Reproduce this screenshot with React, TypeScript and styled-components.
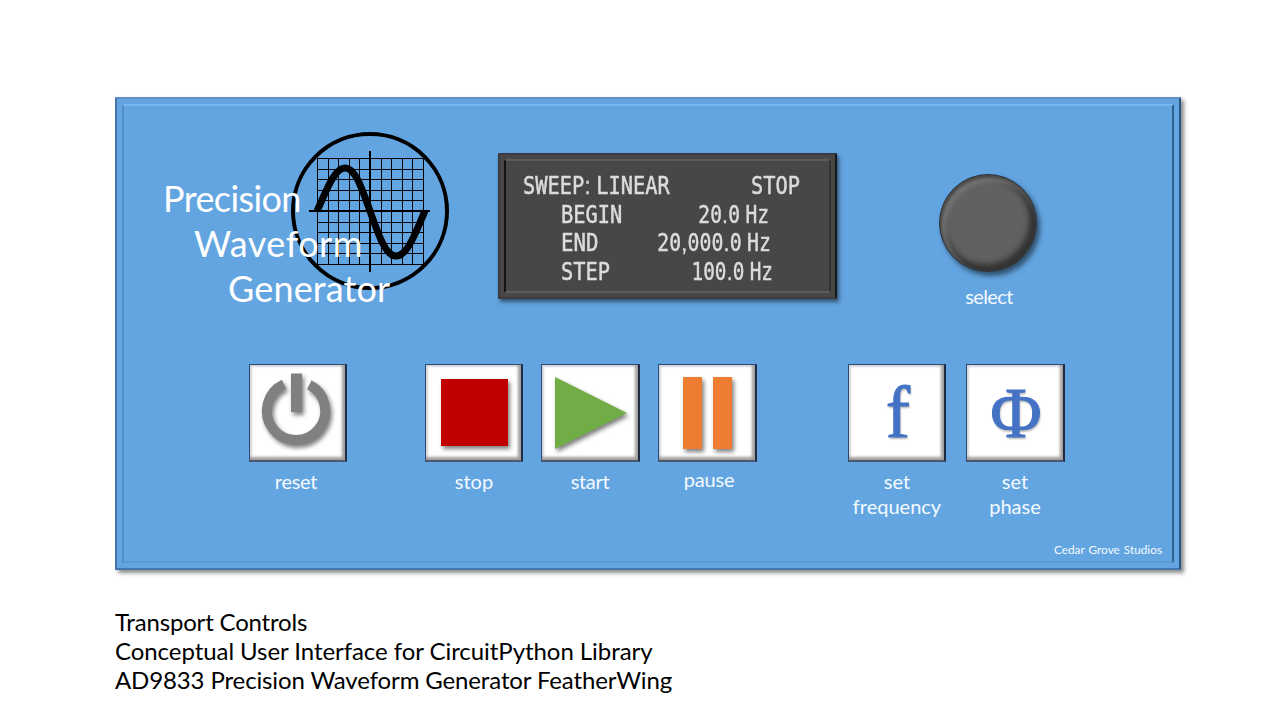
import React from "react";
import styled, { createGlobalStyle } from "styled-components";

const GlobalStyle = createGlobalStyle`
  * { box-sizing: border-box; }
  body { margin: 0; background: #fff; font-family: Lato, "Open Sans", sans-serif; }
`;

const Page = styled.main`
  width: 1280px;
  height: 720px;
  padding: 97px 99px 0 115px;
  overflow: hidden;
  background: #fff;
`;

const Faceplate = styled.section`
  width: 1066px;
  height: 473px;
  padding: 5px;
  background: #63a5e1;
  border: 2px solid #4478ad;
  border-top-color: #5f8fc6;
  border-right-color: #2c5585;
  box-shadow: 3px 3px 4px rgba(0, 0, 0, 0.45);
`;

const Bevel = styled.div`
  height: 100%;
  display: flex;
  flex-direction: column;
  border-style: solid;
  border-width: 2px;
  border-color: #7ab6f0 #2f628f #5b98d0 #5390c8;
`;

const TopRow = styled.div`
  display: flex;
  align-items: flex-start;
  height: 258px;
  padding: 26px 0 0 39px;
`;

const Brand = styled.div`
  position: relative;
  width: 290px;
  height: 180px;
  padding-top: 44px;
  margin-right: 45px;
`;

const Emblem = styled.svg`
  position: absolute;
  left: 128px;
  top: 0;
`;

const BrandLine = styled.div<{ $indent: number; $track: number }>`
  position: relative;
  padding-left: ${(p) => p.$indent}px;
  letter-spacing: ${(p) => p.$track}px;
  font-size: 36px;
  line-height: 45px;
  white-space: nowrap;
  color: #fff;
`;

const Display = styled.div`
  width: 339px;
  height: 146px;
  margin-top: 21px;
  padding: 4px;
  background: #4b4646;
  border: 2px solid #3a3c44;
  border-right-color: #16181f;
  box-shadow: 2px 3px 4px rgba(0, 0, 0, 0.5);
`;

const Screen = styled.div`
  height: 100%;
  padding: 11px 29px 0 17px;
  background: #474747;
  border: 2px solid;
  border-color: #5c5b5b #333 #5c5c5c #141414;
`;

const LcdRow = styled.div<{ $left?: number; $right?: number }>`
  display: flex;
  justify-content: space-between;
  height: 28.7px;
  padding-left: ${(p) => p.$left ?? 0}px;
  padding-right: ${(p) => p.$right ?? 0}px;
`;

const LcdText = styled.span<{ $end?: boolean; $squeeze: number }>`
  display: flex;
  justify-content: ${(p) => (p.$end ? "flex-end" : "flex-start")};
  width: 0;
  font-family: "DejaVu Sans Mono", monospace;
  font-size: 24.5px;
  line-height: 28.7px;
  word-spacing: -8px;
  white-space: nowrap;
  color: #dcdcdc;
  -webkit-text-stroke: 0.5px #dcdcdc;
  transform: scaleX(${(p) => p.$squeeze});
  transform-origin: ${(p) => (p.$end ? "right" : "left")};
`;

const Mark = styled.span`
  padding: 0 0.5px;
  font-family: "Liberation Sans", sans-serif;
`;

const KnobGroup = styled.div`
  display: flex;
  flex-direction: column;
  align-items: center;
  gap: 12px;
  width: 98px;
  margin: 42px 0 0 102px;
`;

const Knob = styled.div`
  width: 98px;
  height: 98px;
  border-radius: 50%;
  background: #616161;
  border: 1px solid #2b3138;
  box-shadow: inset 1px 2px 3px 1px #4a4a4a, inset 5px 6px 4px 1px #757575,
    inset -4px -4px 6px 2px #333, inset 0 0 4px 6px #4c4c4c,
    3px 4px 5px rgba(0, 0, 0, 0.5);
`;

const Label = styled.span<{ $track?: number; $nudge?: number }>`
  padding-left: ${(p) => Math.max(p.$nudge ?? 0, 0) * 2}px;
  padding-right: ${(p) => Math.max(-(p.$nudge ?? 0), 0) * 2}px;
  font-size: 20px;
  line-height: 25px;
  text-align: center;
  white-space: pre;
  letter-spacing: ${(p) => p.$track ?? 0}px;
  color: #f4faff;
`;

const Controls = styled.div`
  display: flex;
  align-items: flex-start;
  padding-left: 125px;
`;

const Control = styled.div<{ $gap: number; $lift?: number }>`
  display: flex;
  flex-direction: column;
  align-items: center;
  width: 98px;
  margin-left: ${(p) => p.$gap}px;
  gap: ${(p) => 7 - (p.$lift ?? 0)}px;
`;

const Key = styled.button<{ $wide?: boolean }>`
  display: flex;
  align-items: flex-start;
  justify-content: flex-start;
  align-self: flex-start;
  width: ${(p) => (p.$wide ? 99 : 98)}px;
  height: 98px;
  padding: 1px 0 0 1px;
  background: #fff;
  border: solid;
  border-width: 1px 2px 2px 1px;
  border-color: #2d4a75 #1d2c44 #4c5870 #2d4a75;
  border-radius: 0;
  box-shadow: inset -3px -3px 3px #a09d9a, inset 2px 2px 2px #d3d5dc;
`;

const Drawing = styled.svg`
  display: block;
  flex: none;
  overflow: visible;
  filter: drop-shadow(2px 3px 2px rgba(0, 0, 0, 0.5));
`;

const Symbol = styled.span<{ $size: number; $squeeze: number }>`
  width: 94px;
  flex: none;
  padding-left: 2px;
  text-align: center;
  font-family: "Liberation Serif", serif;
  font-size: ${(p) => p.$size}px;
  line-height: 94px;
  color: #4472c4;
  -webkit-text-stroke: 1px #4472c4;
  text-shadow: 1px 2px 2px rgba(0, 0, 0, 0.3);
  transform: scaleX(${(p) => p.$squeeze});
`;

const Maker = styled.div`
  margin-top: auto;
  padding: 0 10px 3px 0;
  text-align: right;
  font-size: 11.8px;
  line-height: 16px;
  word-spacing: 1px;
  color: #f4faff;
`;

const Notes = styled.div`
  padding-top: 37px;
`;

const Note = styled.div<{ $track: number }>`
  font-size: 24px;
  line-height: 29px;
  letter-spacing: ${(p) => p.$track}px;
  white-space: nowrap;
  color: #000;
`;

type ReadoutProps = { text: string; end?: boolean; squeeze?: number };

const Readout = ({ text, end, squeeze = 0.83 }: ReadoutProps) => (
  <LcdText $end={end} $squeeze={squeeze}>
    <span>
      {text.split(/([.,:])/).map((part, i) =>
        /^[.,:]$/.test(part) ? <Mark key={i}>{part}</Mark> : part
      )}
    </span>
  </LcdText>
);

const gridLines = Array.from({ length: 11 }, (_, i) => Math.round(26 + i * 10.6) + 0.5);

const ScopeEmblem = () => (
  <Emblem width="160" height="160" viewBox="0 0 160 160" fill="none" stroke="#000">
    <circle cx="79" cy="79" r="77" strokeWidth="4" />
    {gridLines.map((p) => (
      <path key={p} d={`M${p} 26V133M26 ${p}H133`} strokeWidth="1" />
    ))}
    <path d="M79 19V140M18 79H139" strokeWidth="2" />
    <path
      d="M26 79C35 60 43 36 54 36C65 36 72 60 79 79C87 101 94 124 105 124C117 124 125 99 134 79"
      strokeWidth="7"
    />
  </Emblem>
);

const PowerIcon = () => (
  <Drawing width="94" height="94" viewBox="251 366 94 94">
    <path d="M284 384.2A29.2 29.2 0 1 0 309.3 384.8" fill="none" stroke="#808080" strokeWidth="10" />
    <rect x="291" y="373.5" width="11" height="38.5" fill="#808080" />
  </Drawing>
);

const StopIcon = () => (
  <Drawing width="94" height="94" viewBox="427 366 94 94">
    <rect x="441" y="379" width="67" height="67" fill="#c00000" />
  </Drawing>
);

const PlayIcon = () => (
  <Drawing width="94" height="94" viewBox="543 366 94 94">
    <path d="M555 377L627 413L555 449Z" fill="#70ad47" />
  </Drawing>
);

const PauseIcon = () => (
  <Drawing width="94" height="94" viewBox="660 366 94 94">
    <path d="M683 377H702V449H683ZM713 377H732V449H713Z" fill="#ed7d31" />
  </Drawing>
);

export default function App() {
  return (
    <>
      <GlobalStyle />
      <Page>
        <Faceplate>
          <Bevel>
            <TopRow>
              <Brand>
                <ScopeEmblem />
                <BrandLine $indent={0} $track={-0.6}>Precision</BrandLine>
                <BrandLine $indent={31} $track={0.5}>Waveform</BrandLine>
                <BrandLine $indent={65} $track={0.15}>Generator</BrandLine>
              </Brand>
              <Display>
                <Screen>
                  <LcdRow>
                    <Readout text="SWEEP: LINEAR" />
                    <Readout text="STOP" end />
                  </LcdRow>
                  <LcdRow $left={38} $right={31}>
                    <Readout text="BEGIN" />
                    <Readout text="20.0 Hz" end squeeze={0.8} />
                  </LcdRow>
                  <LcdRow $left={38} $right={29}>
                    <Readout text="END" squeeze={0.85} />
                    <Readout text="20,000.0 Hz" end squeeze={0.81} />
                  </LcdRow>
                  <LcdRow $left={38} $right={27}>
                    <Readout text="STEP" />
                    <Readout text="100.0 Hz" end squeeze={0.79} />
                  </LcdRow>
                </Screen>
              </Display>
              <KnobGroup>
                <Knob />
                <Label $track={-0.6} $nudge={1}>select</Label>
              </KnobGroup>
            </TopRow>
            <Controls>
              <Control $gap={0}>
                <Key><PowerIcon /></Key>
                <Label $track={-0.3} $nudge={-2}>reset</Label>
              </Control>
              <Control $gap={78}>
                <Key><StopIcon /></Key>
                <Label>stop</Label>
              </Control>
              <Control $gap={18}>
                <Key $wide><PlayIcon /></Key>
                <Label $track={-0.3}>start</Label>
              </Control>
              <Control $gap={19} $lift={2}>
                <Key $wide><PauseIcon /></Key>
                <Label $track={-0.2} $nudge={2}>pause</Label>
              </Control>
              <Control $gap={92}>
                <Key><Symbol $size={73} $squeeze={1}>f</Symbol></Key>
                <Label>{"set\nfrequency"}</Label>
              </Control>
              <Control $gap={20}>
                <Key $wide><Symbol $size={71} $squeeze={0.99}>Φ</Symbol></Key>
                <Label>{"set\nphase"}</Label>
              </Control>
            </Controls>
            <Maker>Cedar Grove Studios</Maker>
          </Bevel>
        </Faceplate>
        <Notes>
          <Note $track={-0.18}>Transport Controls</Note>
          <Note $track={-0.06}>Conceptual User Interface for CircuitPython Library</Note>
          <Note $track={-0.13}>AD9833 Precision Waveform Generator FeatherWing</Note>
        </Notes>
      </Page>
    </>
  );
}
